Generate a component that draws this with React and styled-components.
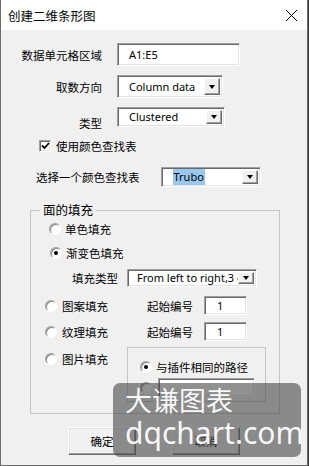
import styled, { createGlobalStyle } from "styled-components";

const GlobalStyle = createGlobalStyle`
  body {
    margin: 0;
    background: #3a3a3a;
    font-family: "Noto Sans CJK SC", "Noto Sans", sans-serif;
    font-size: 11.5px;
    color: #000;
  }
`;

const Window = styled.div`
  position: relative;
  box-sizing: border-box;
  width: 308px;
  height: 466px;
  background: #f0f0f0;
  border: 1px solid #6b6b6b;
  border-top: none;
  display: flex;
  flex-direction: column;
  overflow: hidden;
`;

const TitleBar = styled.div`
  height: 30px;
  flex: none;
  background: #fff;
  display: flex;
  align-items: center;
  justify-content: space-between;
  padding: 0 9px 0 7px;
  font-size: 12.5px;
`;

const Row = styled.div`
  display: flex;
  align-items: ${(p) => p.$align || "center"};
  margin-top: ${(p) => p.$mt || 0}px;
  padding-left: ${(p) => p.$pl || 0}px;
  line-height: 16px;
`;

const Label = styled.span`
  width: ${(p) => (p.$w ? `${p.$w}px` : "auto")};
  text-align: ${(p) => (p.$w ? "right" : "left")};
  margin-right: ${(p) => p.$gap || 0}px;
  margin-bottom: ${(p) => (p.$drop ? -p.$drop : 0)}px;
  white-space: nowrap;
  flex: none;
`;

const sunken = `
  box-sizing: border-box;
  background: #fff;
  border: 1px solid;
  border-color: #a0a0a0 #fff #fff #a0a0a0;
  box-shadow: inset 1px 1px 0 #696969, inset -1px -1px 0 #e3e3e3;
`;

const TextBox = styled.div`
  ${sunken}
  width: ${(p) => p.$w}px;
  height: ${(p) => p.$h || 23}px;
  padding-left: ${(p) => p.$pad || 11}px;
  display: flex;
  align-items: center;
  font-family: "Noto Sans", sans-serif;
  font-size: 11px;
  flex: none;
`;

const Combo = styled.div`
  ${sunken}
  width: ${(p) => p.$w}px;
  height: ${(p) => p.$h || 20}px;
  display: flex;
  align-items: center;
  padding: 2px 2px 2px ${(p) => p.$pad || 11}px;
  font-family: "Noto Sans", sans-serif;
  font-size: 11px;
  flex: none;
`;

const ComboText = styled.span`
  flex: 1;
  overflow: hidden;
  white-space: nowrap;
`;

const Selected = styled.span`
  background: #99c9ef;
  padding: 1px 1px;
`;

const DropButton = styled.span`
  box-sizing: border-box;
  width: 16px;
  align-self: stretch;
  flex: none;
  background: #f0f0f0;
  border: 1px solid;
  border-color: #fff #696969 #696969 #fff;
  box-shadow: inset -1px -1px 0 #a0a0a0;
  display: flex;
  align-items: center;
  justify-content: center;
`;

const Arrow = styled.span`
  width: 0;
  height: 0;
  border-left: 3.5px solid transparent;
  border-right: 3.5px solid transparent;
  border-top: 4px solid #000;
`;

const CheckBox = styled.span`
  ${sunken}
  width: 12px;
  height: 12px;
  margin-right: 5px;
  display: flex;
  align-items: center;
  justify-content: center;
  flex: none;
`;

const Radio = styled.span`
  position: relative;
  box-sizing: border-box;
  width: 12px;
  height: 12px;
  border-radius: 50%;
  background: #fff;
  border: 1px solid;
  border-color: #a0a0a0 #fff #fff #a0a0a0;
  box-shadow: inset 1px 1px 0 #8a8a8a;
  margin-right: ${(p) => p.$gap || 4}px;
  flex: none;
  &::after {
    content: "";
    display: ${(p) => (p.$on ? "block" : "none")};
    position: absolute;
    left: 3px;
    top: 3px;
    width: 4px;
    height: 4px;
    border-radius: 50%;
    background: #000;
  }
`;

const RadioItem = styled.span`
  display: flex;
  align-items: center;
  width: ${(p) => (p.$w ? `${p.$w}px` : "auto")};
  margin-top: ${(p) => p.$mt || 0}px;
  flex: none;
`;

const Group = styled.fieldset`
  box-sizing: border-box;
  width: 250px;
  height: 212px;
  margin: 15px 0 0 29px;
  padding: 0;
  border: 1px solid #c4c4c4;
  min-inline-size: 0;
`;

const Legend = styled.legend`
  margin-left: 9px;
  padding: 0 3px;
  line-height: 16px;
  font-size: 12.5px;
`;

const Frame = styled.div`
  box-sizing: border-box;
  width: 139px;
  height: 55px;
  border: 1px solid #c4c4c4;
  padding: 11px 0 0 12px;
`;

const ButtonRow = styled.div`
  display: flex;
  justify-content: center;
  gap: 36px;
  margin-top: 13px;
`;

const Button = styled.div`
  box-sizing: border-box;
  width: 68px;
  height: 28px;
  background: #f1f1f1;
  border: 1px solid;
  border-color: #fff #696969 #696969 #fff;
  box-shadow: inset -1px -1px 0 #a0a0a0, inset 1px 1px 0 #e3e3e3;
  display: flex;
  align-items: center;
  justify-content: center;
`;

const Watermark = styled.div`
  position: absolute;
  left: 112px;
  top: 383px;
  width: 188px;
  height: 74px;
  border-radius: 7px;
  background: rgba(70, 70, 70, 0.6);
  color: rgba(255, 255, 255, 0.95);
  display: flex;
  flex-direction: column;
  padding-left: 12px;
  box-sizing: border-box;
`;

const MarkCn = styled.div`
  font-family: "Noto Sans CJK SC", sans-serif;
  font-size: 27px;
  line-height: 34px;
`;

const MarkEn = styled.div`
  font-family: "Noto Sans", sans-serif;
  font-size: 30px;
  line-height: 34px;
  margin-top: -1px;
`;

export default function App() {
  return (
    <>
      <GlobalStyle />
      <Window>
        <TitleBar>
          <span>创建二维条形图</span>
          <svg width="13" height="13" viewBox="0 0 13 13">
            <path d="M1 1 L12 12 M12 1 L1 12" stroke="#000" strokeWidth="1" />
          </svg>
        </TitleBar>

        <Row $mt={13}>
          <Label $w={101} $gap={15}>数据单元格区域</Label>
          <TextBox $w={123}>A1:E5</TextBox>
        </Row>
        <Row $mt={9}>
          <Label $w={101} $gap={15}>取数方向</Label>
          <Combo $w={106} $h={23}>
            <ComboText>Column data</ComboText>
            <DropButton><Arrow /></DropButton>
          </Combo>
        </Row>
        <Row $mt={9} $align="flex-end">
          <Label $w={101} $gap={15} $drop={4}>类型</Label>
          <Combo $w={108}>
            <ComboText>Clustered</ComboText>
            <DropButton><Arrow /></DropButton>
          </Combo>
        </Row>
        <Row $mt={11} $pl={38}>
          <CheckBox>
            <svg width="9" height="8" viewBox="0 0 9 8">
              <path d="M1 3.5 L3.5 6 L8 1" stroke="#000" strokeWidth="1.8" fill="none" />
            </svg>
          </CheckBox>
          <Label>使用颜色查找表</Label>
        </Row>
        <Row $mt={13} $pl={35}>
          <Label $gap={21}>选择一个颜色查找表</Label>
          <Combo $w={100}>
            <ComboText><Selected>Trubo</Selected></ComboText>
            <DropButton><Arrow /></DropButton>
          </Combo>
        </Row>

        <Group>
          <Legend>面的填充</Legend>
          <Row $mt={3} $pl={18}>
            <Radio />
            <Label>单色填充</Label>
          </Row>
          <Row $mt={8} $pl={19}>
            <Radio $on />
            <Label>渐变色填充</Label>
          </Row>
          <Row $mt={8} $pl={41}>
            <Label $gap={9}>填充类型</Label>
            <Combo $w={130} $h={18} $pad={9}>
              <ComboText>From left to right,3 colors</ComboText>
              <DropButton><Arrow /></DropButton>
            </Combo>
          </Row>
          <Row $mt={9} $pl={14}>
            <RadioItem $w={102}>
              <Radio $gap={5} />
              <Label>图案填充</Label>
            </RadioItem>
            <Label $gap={11}>起始编号</Label>
            <TextBox $w={43} $h={19} $pad={12}>1</TextBox>
          </Row>
          <Row $mt={7} $pl={14}>
            <RadioItem $w={102}>
              <Radio $gap={5} />
              <Label>纹理填充</Label>
            </RadioItem>
            <Label $gap={11}>起始编号</Label>
            <TextBox $w={43} $h={19} $pad={12}>1</TextBox>
          </Row>
          <Row $mt={6} $pl={14} $align="flex-start">
            <RadioItem $w={82} $mt={4}>
              <Radio $gap={5} />
              <Label>图片填充</Label>
            </RadioItem>
            <Frame>
              <Row>
                <Radio $on $gap={4} />
                <Label>与插件相同的路径</Label>
              </Row>
              <Row $mt={3}>
                <Radio $gap={6} />
                <TextBox $w={97} $h={19} />
              </Row>
            </Frame>
          </Row>
        </Group>

        <ButtonRow>
          <Button>确定</Button>
          <Button>取消</Button>
        </ButtonRow>

        <Watermark>
          <MarkCn>大谦图表</MarkCn>
          <MarkEn>dqchart.com</MarkEn>
        </Watermark>
      </Window>
    </>
  );
}
